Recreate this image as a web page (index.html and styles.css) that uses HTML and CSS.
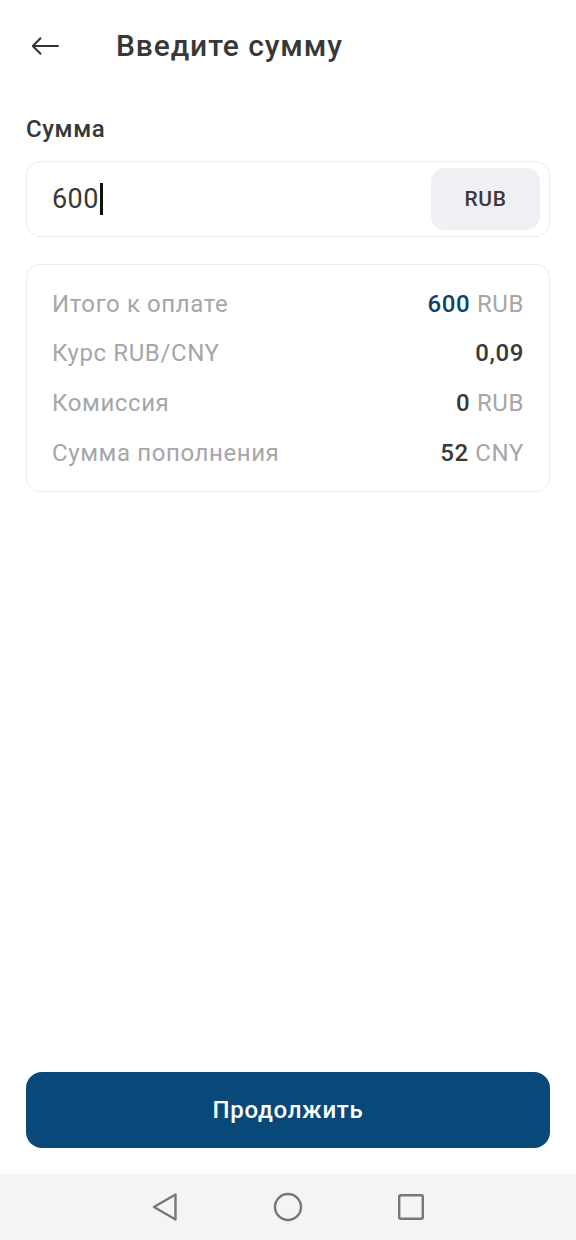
FILE: index.html
```html
<!DOCTYPE html>
<html lang="ru">
<head>
    <meta charset="UTF-8">
    <meta name="viewport" content="width=device-width, initial-scale=1.0">
    <title>Введите сумму</title>
    <link rel="stylesheet" href="styles.css">
</head>
<body>
    <div class="screen">
        <header class="top-bar">
            <button class="back-btn" aria-label="Назад">
                <svg width="28" height="20" viewBox="0 0 28 20" fill="none" stroke="#333" stroke-width="2" stroke-linecap="round" stroke-linejoin="round">
                    <path d="M27 10H2M9.5 2.2L1.8 10l7.7 7.8"/>
                </svg>
            </button>
            <h1>Введите сумму</h1>
        </header>

        <main class="content">
            <label class="field-label">Сумма</label>
            <div class="amount-field">
                <div class="amount-value">600<span class="caret"></span></div>
                <div class="currency-pill">RUB</div>
            </div>

            <div class="summary-card">
                <div class="summary-row">
                    <span class="row-label">Итого к оплате</span>
                    <span class="row-value"><b class="accent">600</b> <span class="unit">RUB</span></span>
                </div>
                <div class="summary-row">
                    <span class="row-label">Курс RUB/CNY</span>
                    <span class="row-value"><b>0,09</b></span>
                </div>
                <div class="summary-row">
                    <span class="row-label">Комиссия</span>
                    <span class="row-value"><b>0</b> <span class="unit">RUB</span></span>
                </div>
                <div class="summary-row">
                    <span class="row-label">Сумма пополнения</span>
                    <span class="row-value"><b>52</b> <span class="unit">CNY</span></span>
                </div>
            </div>
        </main>

        <div class="actions">
            <button class="primary-btn">Продолжить</button>
        </div>

        <nav class="system-nav">
            <span class="nav-icon">
                <svg width="26" height="28" viewBox="0 0 26 28" fill="none" stroke="#777" stroke-width="2.4" stroke-linejoin="round">
                    <path d="M23.5 1.5v25L2 14z"/>
                </svg>
            </span>
            <span class="nav-icon">
                <svg width="30" height="30" viewBox="0 0 30 30" fill="none" stroke="#777" stroke-width="2.4">
                    <circle cx="15" cy="15" r="13"/>
                </svg>
            </span>
            <span class="nav-icon">
                <svg width="28" height="28" viewBox="0 0 28 28" fill="none" stroke="#777" stroke-width="2.4" stroke-linejoin="round">
                    <rect x="2.2" y="2.2" width="23.6" height="23.6" rx="1.5"/>
                </svg>
            </span>
        </nav>
    </div>
</body>
</html>
```

FILE: styles.css
```css
:root {
    --text-dark: #383838;
    --text-muted: #a6a6a9;
    --border: #ececf0;
    --pill-bg: #efeff4;
    --brand: #09497a;
    --accent-text: #0c426d;
}

* {
    box-sizing: border-box;
}

body {
    margin: 0;
    font-family: Roboto, "Noto Sans", sans-serif;
    color: var(--text-dark);
    background: #ffffff;
}

.screen {
    min-height: 1240px;
    display: flex;
    flex-direction: column;
}

.top-bar {
    height: 92px;
    display: flex;
    align-items: center;
    padding: 0 0 1px 31px;
}

.back-btn {
    background: none;
    border: none;
    padding: 0;
    width: 85px;
    display: flex;
    align-items: center;
    cursor: pointer;
}

.top-bar h1 {
    margin: 0;
    font-size: 30px;
    font-weight: 500;
    letter-spacing: 0.9px;
    color: var(--text-dark);
}

.content {
    flex: 1;
    padding: 0 26px;
}

.field-label {
    display: block;
    font-size: 24px;
    font-weight: 500;
    letter-spacing: 0.6px;
    line-height: 28px;
    margin: 23px 0 18px;
}

.amount-field {
    height: 76px;
    border: 1.5px solid var(--border);
    border-radius: 14px;
    display: flex;
    align-items: center;
    justify-content: space-between;
    padding: 0 9px 0 25px;
}

.amount-value {
    font-size: 27px;
    letter-spacing: 0.4px;
    display: flex;
    align-items: center;
}

.caret {
    display: inline-block;
    width: 3px;
    height: 32px;
    background: #111;
    margin-left: 1px;
}

.currency-pill {
    width: 109px;
    height: 62px;
    border-radius: 14px;
    background: var(--pill-bg);
    display: flex;
    align-items: center;
    justify-content: center;
    font-size: 21px;
    font-weight: 500;
    letter-spacing: 0.6px;
    color: #3a3a3a;
}

.summary-card {
    margin-top: 27px;
    border: 1.5px solid var(--border);
    border-radius: 14px;
    padding: 23.5px 25px 23.5px;
    display: flex;
    flex-direction: column;
    gap: 19.7px;
}

.summary-row {
    display: flex;
    justify-content: space-between;
    align-items: center;
    font-size: 24px;
    letter-spacing: 0.6px;
    line-height: 30px;
}

.row-label {
    color: var(--text-muted);
}

.row-value b {
    font-weight: 500;
    color: var(--text-dark);
}

.row-value b.accent {
    color: var(--accent-text);
}

.unit {
    color: var(--text-muted);
}

.actions {
    padding: 0 26px 26px;
}

.primary-btn {
    width: 100%;
    height: 76px;
    border: none;
    border-radius: 16px;
    background: var(--brand);
    color: #ffffff;
    font-family: inherit;
    font-size: 24px;
    font-weight: 500;
    letter-spacing: 0.7px;
    cursor: pointer;
}

.system-nav {
    height: 66px;
    background: #f4f4f4;
    display: flex;
    align-items: center;
    justify-content: center;
    gap: 93px;
}

.nav-icon {
    width: 30px;
    display: flex;
    justify-content: center;
}
```
